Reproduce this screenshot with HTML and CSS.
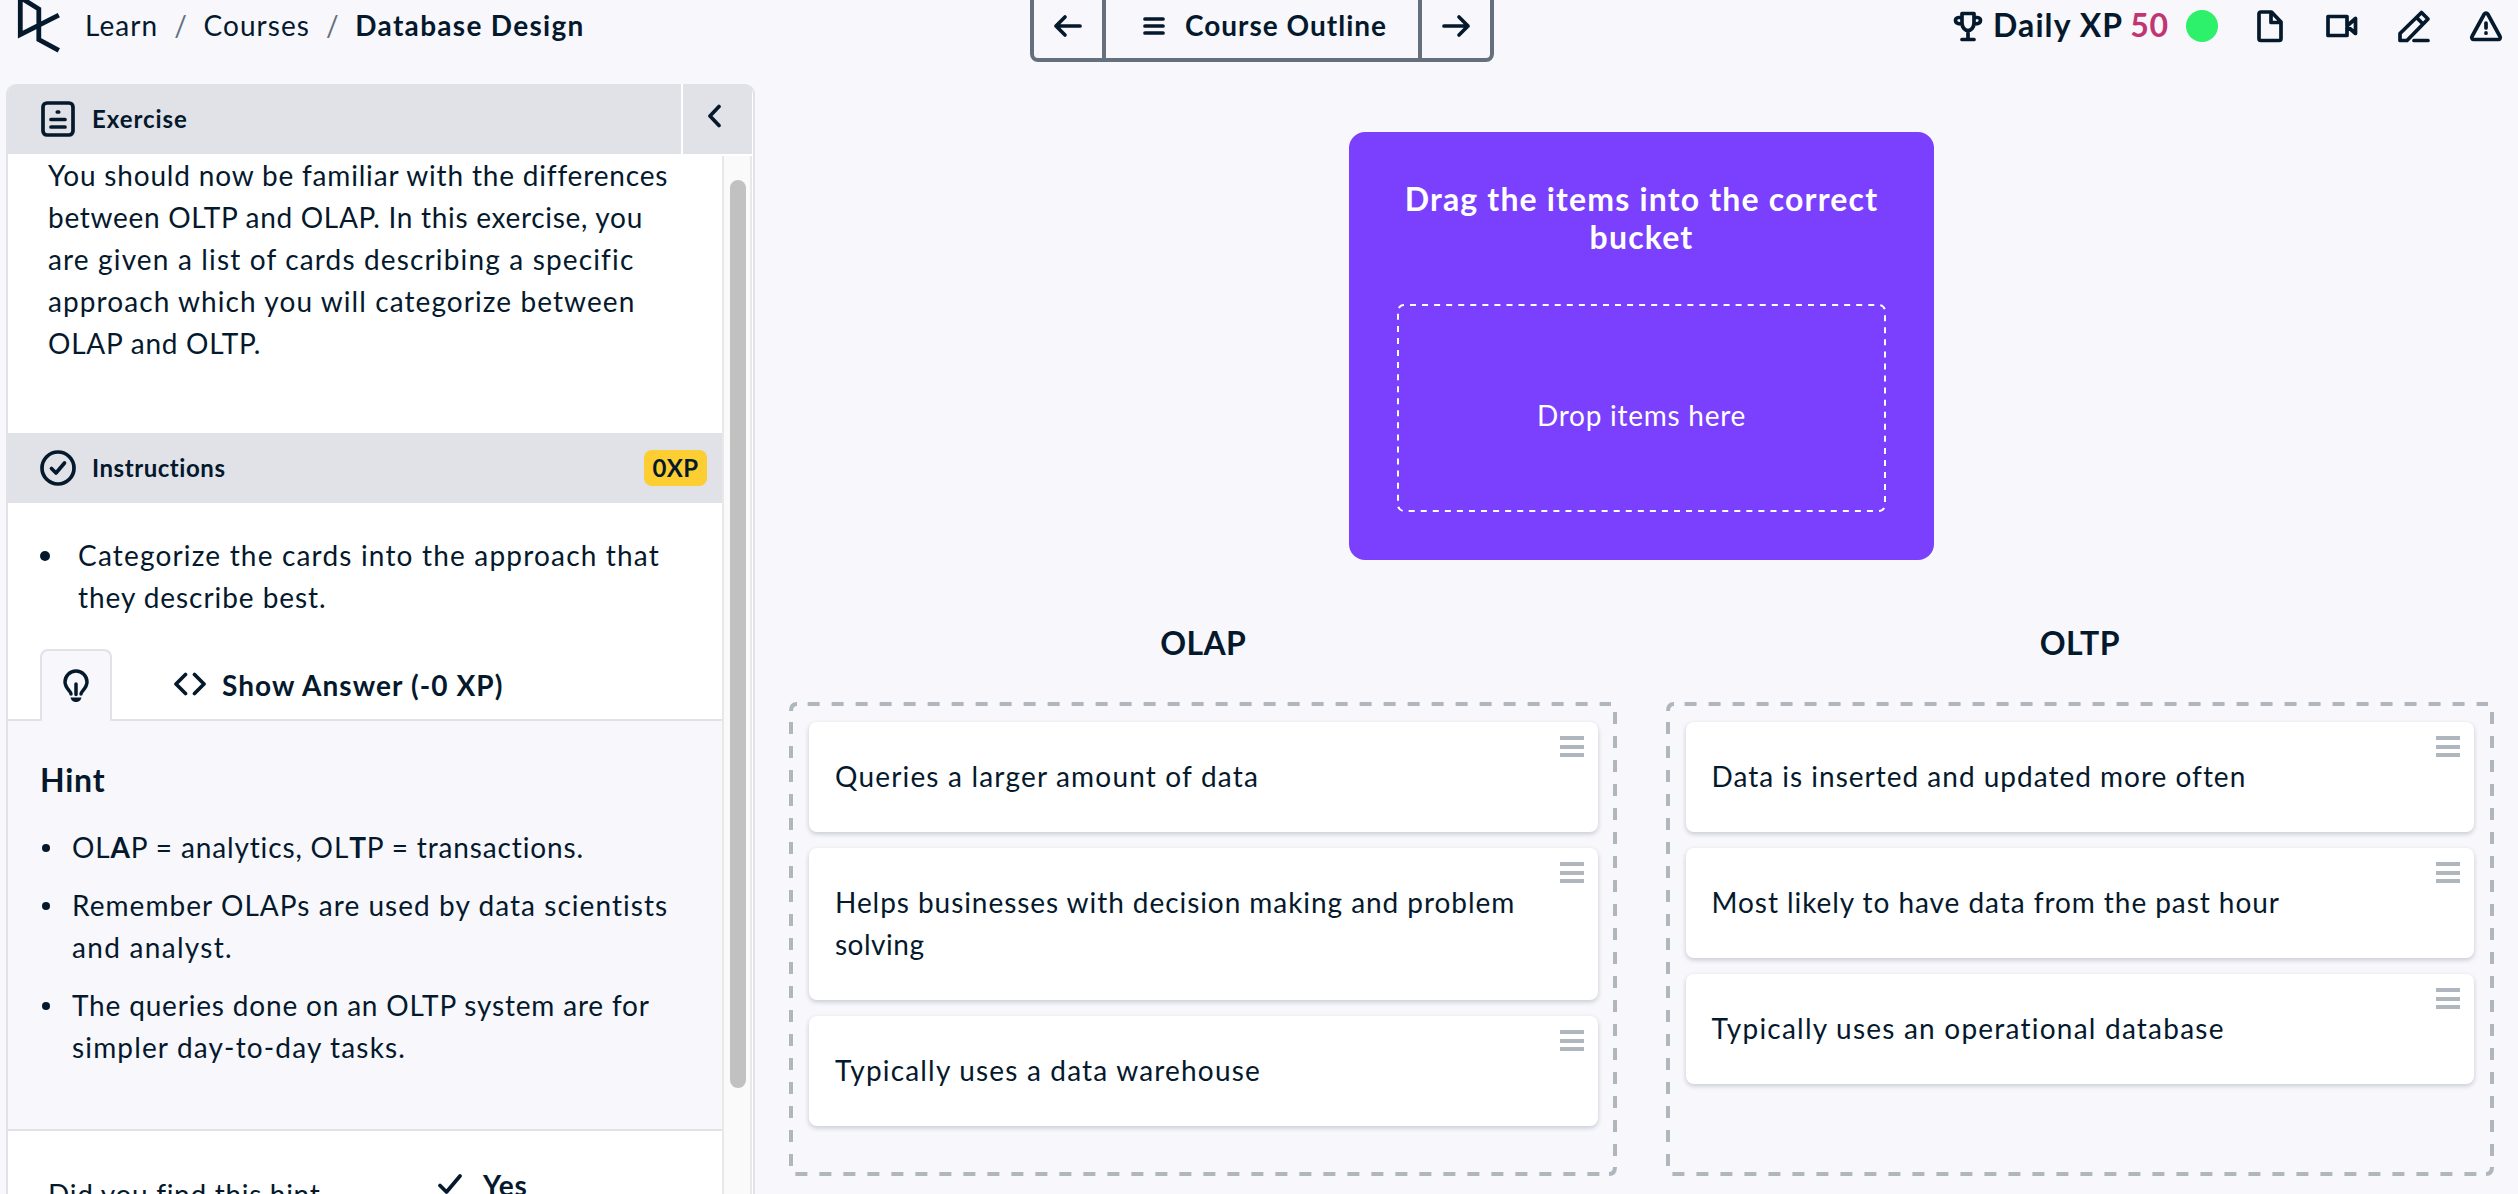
FILE: index.html
```html
<!DOCTYPE html>
<html lang="en">
<head>
<meta charset="utf-8">
<title>Database Design</title>
<link rel="stylesheet" href="styles.css">
</head>
<body>
<header class="topbar">
  <nav class="crumbs">
    <svg class="logo" width="44" height="56" viewBox="17 -2 44 56"><path d="M58.8 16.200 20.300 35.600V-1.500L38.800 10v30.500l20 10.900"/></svg>
    <span class="ls-105">Learn</span><span class="slash">/</span><span class="ls-105">Courses</span><span class="slash">/</span><strong class="ls-130">Database Design</strong>
  </nav>
  <div class="outline">
    <span class="outline-arrow"><svg class="icon" width="30" height="24" viewBox="0 0 30 24"><path d="M27 12H3M12 3l-9 9 9 9"/></svg></span>
    <span class="outline-main"><svg class="icon" width="24" height="24" viewBox="0 0 24 24"><path d="M3 5h18M3 12h18M3 19h18"/></svg><b class="outline-label">Course Outline</b></span>
    <span class="outline-arrow"><svg class="icon" width="30" height="24" viewBox="0 0 30 24"><path d="M3 12h24M18 3l9 9-9 9"/></svg></span>
  </div>
  <div class="tools">
    <svg class="icon" width="30" height="32" viewBox="0 0 30 32"><path d="M9 3.500h12v9.500c0 4.500-3 7.500-6 7.500s-6-3-6-7.500zM15 20.500V29M9 29.500h12M9 7.500H5.500c-2 0-3 1.500-3 3 0 2.500 3 3.500 6.500 3.500M21 7.500h3.500c2 0 3 1.500 3 3 0 2.500-3 3.500-6.500 3.500"/></svg>
    <b class="xp-label">Daily XP</b><b class="xp-value">50</b><span class="status"></span>
    <svg class="icon doc" width="28" height="34" viewBox="0 0 28 34"><path d="M5 3h10.500l9.500 10v16.500a2 2 0 0 1-2 2H5a2 2 0 0 1-2-2V5a2 2 0 0 1 2-2zM15 3v10.500h10"/></svg>
    <svg class="icon video" width="34" height="26" viewBox="0 0 34 26"><path d="M3 3.500h19v19H3zM22 13l8.500-7.500v15z"/></svg>
    <svg class="icon pencil" width="34" height="34" viewBox="0 0 34 34"><path d="M3 31.500v-7L24.500 3.500 31 10 10 31.500zM19.500 8.500l6.500 6.500M17 31.500h14"/></svg>
    <svg class="icon" width="34" height="32" viewBox="0 0 34 32"><path d="M15.300 4a2 2 0 0 1 3.400 0L31 26.500a2 2 0 0 1-1.800 3H4.800a2 2 0 0 1-1.800-3zM17 13v5M17 22.900v.300"/></svg>
  </div>
</header>
<div class="workspace">
  <aside class="panel">
    <div class="panel-head">
      <div class="panel-title"><svg class="icon" width="36" height="38" viewBox="0 0 36 38"><rect x="3" y="3" width="30" height="32" rx="4"/><path d="M11 19.500h14M11 27h14M17.300 12h1.400"/></svg><b class="label ls-90">Exercise</b></div>
      <div class="collapse"><svg class="icon" width="16" height="24" viewBox="0 0 16 24"><path d="M12 2.500 3 12l9 9.500"/></svg></div>
    </div>
    <div class="panel-body">
      <div class="scroll">
        <p class="intro"><span class="ls-82">You should now be familiar with the differences</span><br><span class="ls-70">between OLTP and OLAP. In this exercise, you</span><br><span class="ls-115">are given a list of cards describing a specific</span><br><span class="ls-108">approach which you will categorize between</span><br>OLAP and OLTP.</p>
        <div class="bar">
          <svg class="icon" width="38" height="38" viewBox="0 0 38 38"><circle cx="19" cy="19" r="16"/><path d="M12.500 19.500 17 24l8.500-10"/></svg>
          <b class="label">Instructions</b><b class="badge">0XP</b>
        </div>
        <ul class="steps"><li><span class="ls-117">Categorize the cards into the approach that</span><br><span class="ls-95">they describe best.</span></li></ul>
        <div class="tabs">
          <div class="tab"><svg class="icon" width="28" height="36" viewBox="0 0 28 36"><path d="M9 25c0-3-6-5.500-6-12.200a11 10.800 0 0 1 22 0C25 19.500 19 22 19 25M14 15v10.500"/><path class="bulb-base" d="M8.500 28.500h11c-1 3.500-3 4.500-5.500 4.500s-4.500-1-5.500-4.500z"/></svg></div>
          <div class="answer"><svg class="icon" width="34" height="24" viewBox="0 0 34 24"><path d="M12.500 2.500 3 12l9.500 9.500M21.500 2.500 31 12l-9.500 9.500"/></svg><b class="ls-108">Show Answer (-0 XP)</b></div>
        </div>
        <section class="hint">
          <h2 class="hint-title">Hint</h2>
          <ul class="hints">
            <li class="ls-85">OL<b>A</b>P = analytics, OL<b>T</b>P = transactions.</li>
            <li><span class="ls-105">Remember OLAPs are used by data scientists</span><br><span class="ls-130">and analyst.</span></li>
            <li><span class="ls-82">The queries done on an OLTP system are for</span><br><span class="ls-115">simpler day-to-day tasks.</span></li>
          </ul>
        </section>
        <div class="feedback">
          <span class="question">Did you find this hint</span>
          <span class="yes"><svg class="icon" width="26" height="22" viewBox="0 0 26 22"><path d="M3 12.500 9.500 19 23 3"/></svg><b>Yes</b></span>
        </div>
      </div>
      <div class="track"><div class="thumb"></div></div>
    </div>
  </aside>
  <main class="board">
    <section class="source">
      <h1 class="source-title">Drag the items into the correct<br>bucket</h1>
      <div class="drop"><svg class="dashes" width="489" height="208"><rect x="1" y="1" width="487" height="206" rx="6"/></svg>Drop items here</div>
    </section>
    <div class="buckets">
      <section class="bucket">
        <h2 class="bucket-title">OLAP</h2>
        <div class="zone">
          <svg class="dashes" width="829" height="474"><path d="M18.600 2H822M826 10V457M6.400 472H812M2 20V466M2 9Q2 2 8 2M826 465Q826 472 820 472"/></svg>
          <div class="card ls-117">Queries a larger amount of data<i class="grip"></i></div>
          <div class="card"><span class="ls-95">Helps businesses with decision making and problem</span><br><span class="ls-50">solving</span><i class="grip"></i></div>
          <div class="card ls-117">Typically uses a data warehouse<i class="grip"></i></div>
        </div>
      </section>
      <section class="bucket">
        <h2 class="bucket-title">OLTP</h2>
        <div class="zone">
          <svg class="dashes" width="829" height="474"><path d="M18.600 2H822M826 10V457M6.400 472H812M2 20V466M2 9Q2 2 8 2M826 465Q826 472 820 472"/></svg>
          <div class="card ls-100">Data is inserted and updated more often<i class="grip"></i></div>
          <div class="card ls-95">Most likely to have data from the past hour<i class="grip"></i></div>
          <div class="card ls-122">Typically uses an operational database<i class="grip"></i></div>
        </div>
      </section>
    </div>
  </main>
</div>
</body>
</html>
```
FILE: styles.css
```css
* { box-sizing: border-box; }
body {
  margin: 0;
  height: 1194px;
  overflow: hidden;
  background: #f7f7fc;
  color: #05192d;
  font: 28px/42px Lato, "Noto Sans", sans-serif;
  letter-spacing: 0.75px;
  white-space: nowrap;
}
h1, h2, p, ul { margin: 0; padding: 0; }
ul { list-style: none; }
svg { display: block; flex: none; }
.icon { fill: none; stroke: #05192d; stroke-width: 3.7; stroke-linecap: round; stroke-linejoin: round; }

/* Top bar */
.topbar { display: grid; grid-template-columns: 1030px 464px 1fr; height: 84px; align-items: start; }
.crumbs { display: flex; align-items: center; height: 50px; padding-left: 17px; }
.logo { fill: none; stroke: #05192d; stroke-width: 4.8; margin-right: 24px; }
.slash { color: #65707c; margin: 0 16px; }
.outline { display: flex; height: 70px; margin-top: -8px; border: 4px solid #65707c; border-radius: 8px; }
.outline-arrow { width: 68px; display: flex; align-items: center; justify-content: center; padding-bottom: 2px; }
.outline-main { flex: 1; display: flex; align-items: center; gap: 19px; padding: 0 0 2px 36px; border: solid #65707c; border-width: 0 4px; }
.outline-label { margin-top: -3px; letter-spacing: 1px; }
.tools { display: flex; align-items: center; height: 52px; padding-left: 459px; }
.xp-label { font-size: 32px; margin: -3px 7px 0 10px; letter-spacing: 1.1px; }
.xp-value { font-size: 32px; color: #c13672; margin: -3px 18px 0 0; width: 38px; }
.status { width: 32px; height: 32px; border-radius: 50%; background: #2df06b; margin-right: 38px; }
.doc { margin-right: 41px; }
.video { margin-right: 38px; }
.pencil { margin-right: 38px; }

/* Exercise panel */
.workspace { display: flex; height: 1110px; }
.panel { width: 749px; margin-left: 6px; border: 2px solid #e1e2e7; border-width: 0 2px; border-radius: 10px 10px 0 0; overflow: hidden; background: #fff; }
.panel-head { display: flex; height: 70px; gap: 2px; }
.panel-title, .collapse { background: #e1e2e7; display: flex; align-items: center; }
.panel-title { width: 673px; padding-left: 32px; gap: 16px; }
.label { font-size: 24px; letter-spacing: 0.55px; }
.collapse { flex: 1; padding: 0 0 6px 24px; margin-right: 1px; }
.panel-body { display: flex; height: 1040px; overflow: hidden; }
.scroll { width: 714px; }
.intro { height: 279px; padding-left: 40px; }
.bar { display: flex; align-items: center; height: 70px; padding: 0 16px 0 31px; gap: 15px; background: #e1e2e7; width: 715px; }
.badge { margin-left: auto; width: 63px; height: 36px; border-radius: 8px; background: #fcce32; font-size: 24px; line-height: 36px; text-align: center; letter-spacing: 0.3px; }
.steps { padding: 31px 0 31px 70px; }
.steps li::before, .hints li::before { content: ""; float: left; width: 10px; height: 10px; border-radius: 50%; background: #05192d; margin: 17px 0 0 -38px; }
.tabs { display: flex; height: 72px; padding-left: 32px; border-bottom: 2px solid #e1e2e7; }
.tab { width: 72px; height: 72px; border: 2px solid #e1e2e7; border-bottom: 0; border-radius: 8px 8px 0 0; background: #f7f7fc; display: flex; justify-content: center; padding-top: 18px; }
.tab .icon { stroke-width: 3.5; }
.tab .bulb-base { fill: #05192d; stroke: none; }
.answer { display: flex; align-items: center; margin-left: 61px; gap: 15px; padding-top: 1px; }
.answer .icon { margin-top: -2px; }
.hint { height: 408px; padding: 40px 0 0 32px; background: #f7f7fc; }
.hint-title { font-size: 32px; line-height: 38px; }
.hints { display: grid; gap: 16px; padding: 27px 0 0 32px; }
.hints li::before { width: 8px; height: 8px; margin: 18px 0 0 -30px; }
.feedback { display: flex; align-items: flex-start; border-top: 2px solid #e1e2e7; padding-left: 40px; height: 120px; }
.question { width: 389px; margin-top: 42px; letter-spacing: 0.7px; }
.yes { display: flex; align-items: center; gap: 20px; margin-top: 33px; }
.yes .icon { margin-top: -2px; }
.track { width: 30px; margin-top: 2px; border: 2px solid #e8e8e8; border-top: 0; border-bottom: 0; background: #fafafa; padding: 24px 0 0 6px; }
.thumb { width: 16px; height: 908px; border-radius: 8px; background: #c1c1c1; }

/* Sorting board */
.board { width: 1705px; margin-left: 34px; padding-top: 48px; }
.source { width: 585px; height: 428px; margin: 0 auto; padding: 48px 48px 0; border-radius: 16px; background: #7a40fd; color: #fff; text-align: center; }
.source-title { font-size: 32px; line-height: 38px; letter-spacing: 1.17px; }
.drop { position: relative; height: 208px; margin-top: 48px; padding-top: 90px; }
.dashes { position: absolute; left: 0; top: 0; fill: none; stroke: #b0b6be; stroke-width: 4; stroke-dasharray: 12 12; }
.drop .dashes { stroke: #fff; stroke-width: 2; stroke-dasharray: 6 6.060; stroke-dashoffset: -6; }
.buckets { display: grid; grid-template-columns: 1fr 1fr; gap: 48px; margin-top: 64px; }
.bucket-title { font-size: 32px; line-height: 38px; text-align: center; letter-spacing: 0.4px; }
.zone { position: relative; height: 474px; margin-top: 40px; padding: 20px; display: flex; flex-direction: column; gap: 16px; }
.card { position: relative; padding: 33px 25px 35px 26px; border-radius: 8px; background: #fff; box-shadow: 0 2px 5px rgba(5, 25, 45, 0.2); }
.grip { position: absolute; right: 14px; top: 14px; width: 24px; height: 21px; border: solid #b0b6be; border-width: 4px 0; background: linear-gradient(#b0b6be, #b0b6be) center / 100% 4px no-repeat; }

/* Tracking steps */
.ls-50 { letter-spacing: 0.5px; }
.ls-70 { letter-spacing: 0.7px; }
.ls-82 { letter-spacing: 0.82px; }
.ls-85 { letter-spacing: 0.86px; }
.ls-90 { letter-spacing: 0.95px; }
.ls-95 { letter-spacing: 0.94px; }
.ls-100 { letter-spacing: 1px; }
.ls-105 { letter-spacing: 1.05px; }
.ls-108 { letter-spacing: 1.08px; }
.ls-115 { letter-spacing: 1.15px; }
.ls-117 { letter-spacing: 1.18px; }
.ls-122 { letter-spacing: 1.22px; }
.ls-130 { letter-spacing: 1.3px; }
```
